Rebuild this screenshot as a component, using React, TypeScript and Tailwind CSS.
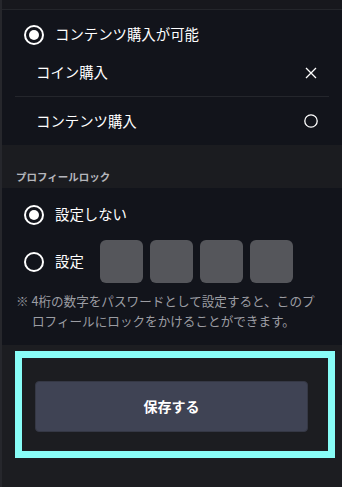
import React from "react";

const font = { fontFamily: '"Noto Sans CJK JP", "Noto Sans", sans-serif' };

function Radio({ checked }: { checked: boolean }) {
  return (
    <span className="flex h-[20px] w-[20px] shrink-0 items-center justify-center rounded-full border-2 border-white">
      {checked && <span className="h-[10px] w-[10px] rounded-full bg-white" />}
    </span>
  );
}

export default function App() {
  return (
    <div className="h-[487px] w-[342px] overflow-hidden border-l-2 border-[#26272c] bg-[#1c1d21] text-white" style={font}>
      <div className="h-[9px] bg-[#17181d]" />
      <div className="h-px bg-[#24262b]" />
      <div className="bg-[#12141b] pb-0">
        <div className="flex h-[38px] items-end pl-[22px]">
          <div className="flex h-[26px] items-center gap-[11px] pb-[1px]">
            <Radio checked />
            <span className="text-[14.4px] leading-none">コンテンツ購入が可能</span>
          </div>
        </div>
        <div className="mx-[13px] pt-[1px]">
          <div className="flex h-[48px] items-center justify-between border-b border-[#24262c] pl-[21px] pr-[12px]">
            <span className="text-[14.4px] leading-none">コイン購入</span>
            <svg width="12" height="12" viewBox="0 0 12 12">
              <path d="M1 1 L11 11 M11 1 L1 11" stroke="white" strokeWidth="1.3" />
            </svg>
          </div>
          <div className="flex h-[48px] items-center justify-between pl-[21px] pr-[11px]">
            <span className="text-[14.4px] leading-none">コンテンツ購入</span>
            <svg width="14" height="14" viewBox="0 0 14 14">
              <circle cx="7" cy="7" r="6.2" fill="none" stroke="white" strokeWidth="1.3" />
            </svg>
          </div>
        </div>
      </div>
      <div className="flex h-[43px] items-end bg-[#1b1c20] pb-[6px] pl-[14px]">
        <span className="text-[10.5px] font-bold leading-none text-[#b5b6bc]">プロフィールロック</span>
      </div>
      <div className="bg-[#12141b] pb-[14px]">
        <div className="flex h-[52px] items-center gap-[11px] pl-[22px] pt-[1px]">
          <Radio checked />
          <span className="text-[14.4px] leading-none">設定しない</span>
        </div>
        <div className="flex items-center pl-[22px]">
          <Radio checked={false} />
          <span className="ml-[11px] text-[14.4px] leading-none">設定</span>
          <div className="ml-[16px] flex gap-[7px]">
            <div className="h-[43px] w-[43px] rounded-[6px] bg-[#55565b]" />
            <div className="h-[43px] w-[43px] rounded-[6px] bg-[#55565b]" />
            <div className="h-[43px] w-[43px] rounded-[6px] bg-[#55565b]" />
            <div className="h-[43px] w-[43px] rounded-[6px] bg-[#55565b]" />
          </div>
        </div>
        <p className="mt-[8px] pl-[30px] pr-[20px] -indent-[16px] text-[12.6px] leading-[20px] text-[#9c9da3]">
          ※ 4桁の数字をパスワードとして設定すると、このプロフィールにロックをかけることができます。
        </p>
      </div>
      <div className="pl-[13px] pt-[6px]">
        <div className="w-[320px] border-[7px] border-[#88fdf7] pb-[19px] pl-[13px] pr-[20px] pt-[23px]">
          <button className="flex h-[51px] w-[273px] items-center justify-center rounded-[4px] border border-[#353845] bg-[#3f4354] text-[14px] font-bold text-white">
            保存する
          </button>
        </div>
      </div>
    </div>
  );
}
